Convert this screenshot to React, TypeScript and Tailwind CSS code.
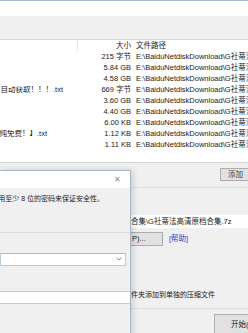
import React from 'react';

const rows = [
  { name: '', end: 0, size: '215 字节' },
  { name: '', end: 0, size: '5.84 GB' },
  { name: '', end: 0, size: '4.58 GB' },
  { name: '自动获取！！！.txt', end: 63, size: '669 字节' },
  { name: '', end: 0, size: '3.60 GB' },
  { name: '', end: 0, size: '4.40 GB' },
  { name: '', end: 0, size: '6.00 KB' },
  { name: '纯免费！】.txt', end: 47, size: '1.12 KB' },
  { name: '', end: 0, size: '1.11 KB' },
];

const path = 'E:\\BaiduNetdiskDownload\\G社蒂法高清原档合集';

const FileList: React.FC = () => (
  <div className="bg-white h-[123px] border-b border-[#d4d4d4] overflow-hidden">
    <div className="flex h-[11px] items-center leading-none">
      <div className="w-[78px] shrink-0 h-full border-r border-[#e5e5e5]" />
      <div className="w-[54px] shrink-0 text-right pr-[1px]">大小</div>
      <div className="pl-[4px] min-w-0 whitespace-nowrap">文件路径</div>
    </div>
    {rows.map((r, i) => (
      <div key={i} className="flex h-[11px] items-center leading-none whitespace-nowrap">
        <div className="w-[78px] shrink-0">
          {r.name && (
            <div className="flex justify-end overflow-hidden" style={{ width: r.end }}>
              <span className="shrink-0">{r.name}</span>
            </div>
          )}
        </div>
        <div className="w-[54px] shrink-0 text-right pr-[1px]">{r.size}</div>
        <div className="pl-[4px] min-w-0">{path}</div>
      </div>
    ))}
  </div>
);

const EncryptDialog: React.FC = () => (
  <div className="absolute left-0 top-[170px] w-[131px] h-[170px] bg-[#f0f0f0] border-r border-t border-[#a7b4c4] shadow-[2px_0_6px_rgba(0,0,0,0.15)]">
    <div className="h-[17px] bg-white flex items-center justify-end pr-[9px] text-[#888] text-[8px]">✕</div>
    <div className="mt-[6px] w-[104px] flex justify-end overflow-hidden whitespace-nowrap text-[7px]">
      <span className="shrink-0">用至少 8 位的密码来保证安全性。</span>
    </div>
    <div className="mt-[27px] border-t border-[#dcdcdc]" />
    <div className="mt-[20px] w-[126px] h-[13px] bg-white border border-[#b9cbd6] border-t-[#8cc8d8] flex items-center justify-end pr-[3px]">
      <svg width="6" height="4" viewBox="0 0 6 4"><path d="M0.5 0.5 L3 3 L5.5 0.5" fill="none" stroke="#888" strokeWidth="1" /></svg>
    </div>
    <div className="mt-[25px] h-[13px] bg-white border-y border-[#c8c8c8]" />
  </div>
);

export default function App() {
  return (
    <div className="relative w-[248px] h-[333px] overflow-hidden bg-[#f0f0f0] text-[7.5px] text-[#1a1a1a] font-['Liberation_Sans','Noto_Sans_CJK_SC',sans-serif]">
      <div className="border-t border-[#a9b9ca] h-[16px] bg-white" />
      <div className="h-[24px] bg-[#f0f0f0] border-b border-[#d9d9d9]" />
      <FileList />
      <div className="relative">
        <div className="flex justify-end pt-[5px]">
          <div className="w-[28px] h-[13px] bg-[#e1e1e1] border border-[#adadad] border-r-0 pl-[7px] flex items-center whitespace-nowrap overflow-hidden text-[#444]">添加</div>
        </div>
        <div className="mt-[6px] border-t border-[#dcdcdc]" />
        <div className="mt-[27px] pl-[131px] whitespace-nowrap h-[13px] bg-white flex items-center">合集\G社蒂法高清原档合集.7z</div>
        <div className="mt-[4px] flex items-center">
          <div className="w-[163px] h-[14px] bg-[#e1e1e1] border border-[#adadad] pl-[131px] flex items-center">P)...</div>
          <div className="ml-[6px] text-[#3a3ac8]">[帮助]</div>
        </div>
        <div className="mt-[44px] pl-[131px] whitespace-nowrap text-[7px]">件夹添加到单独的压缩文件</div>
        <div className="mt-[7px] border-t border-[#dcdcdc]" />
        <div className="flex justify-end pt-[5px]">
          <div className="w-[34px] h-[20px] bg-[#e1e1e1] border border-[#adadad] border-r-0 pl-[16px] pt-[4px] whitespace-nowrap overflow-hidden">开始(S)</div>
        </div>
      </div>
      <EncryptDialog />
    </div>
  );
}
